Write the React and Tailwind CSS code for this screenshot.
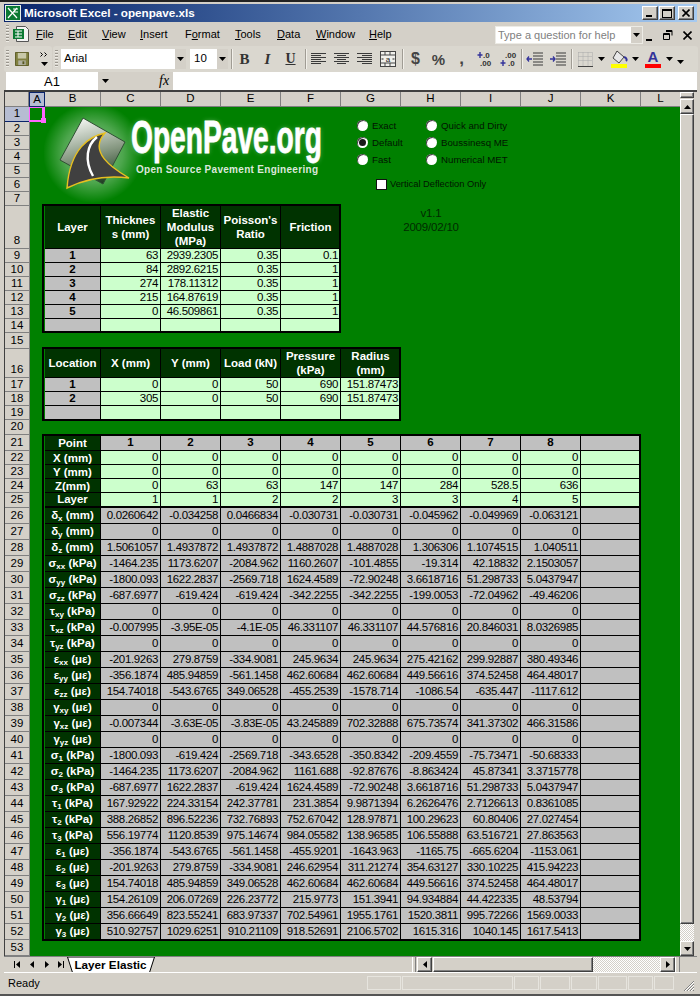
import React from "react"

const BEVEL = "border border-t-white border-l-white border-r-[#404040] border-b-[#404040] shadow-[inset_-1px_-1px_0_#808080] bg-[#d4d0c8]"
const DITHER = "bg-[image:repeating-conic-gradient(#ffffff_0_25%,#d4d0c8_0_50%)] bg-[length:2px_2px]"

// column widths B..L
const COLS = ["w-[56px]", "w-[60px]", "w-[60px]", "w-[60px]", "w-[60px]", "w-[60px]", "w-[60px]", "w-[60px]", "w-[60px]", "w-[60px]", "w-[40px]"]
const COL_NAMES = ["B", "C", "D", "E", "F", "G", "H", "I", "J", "K", "L"]

const LINE = "border-r border-b border-black"
const BOLD = "font-bold text-[11.5px]"
const NUM = "flex items-center justify-end pr-[2px] whitespace-nowrap text-[11.5px] tracking-[-0.35px]"
const KIND = {
    head: `${LINE} bg-[#003300] text-white ${BOLD} flex items-center justify-center text-center leading-[14px] whitespace-pre-line`,
    headT: `border-r border-b-2 border-black bg-[#003300] text-white ${BOLD} flex items-center justify-center`,
    tag: `${LINE} bg-[#c0c0c0] ${BOLD} flex items-center justify-center`,
    num: `${LINE} bg-[#ccffcc] ${NUM}`,
    numT: `border-r border-b-2 border-black bg-[#ccffcc] ${NUM}`,
    gray: `${LINE} bg-[#c0c0c0] ${NUM}`,
}

const ZERO = ["0", "0", "0", "0", "0", "0", "0", "0"]

const RESULTS = [
    [26, "δ", "x", " (mm)", ["0.0260642", "-0.034258", "0.0466834", "-0.030731", "-0.030731", "-0.045962", "-0.049969", "-0.063121"]],
    [27, "δ", "y", " (mm)", ZERO],
    [28, "δ", "z", " (mm)", ["1.5061057", "1.4937872", "1.4937872", "1.4887028", "1.4887028", "1.306306", "1.1074515", "1.040511"]],
    [29, "σ", "xx", " (kPa)", ["-1464.235", "1173.6207", "-2084.962", "1160.2607", "-101.4855", "-19.314", "42.18832", "2.1503057"]],
    [30, "σ", "yy", " (kPa)", ["-1800.093", "1622.2837", "-2569.718", "1624.4589", "-72.90248", "3.6618716", "51.298733", "5.0437947"]],
    [31, "σ", "zz", " (kPa)", ["-687.6977", "-619.424", "-619.424", "-342.2255", "-342.2255", "-199.0053", "-72.04962", "-49.46206"]],
    [32, "τ", "xy", " (kPa)", ZERO],
    [33, "τ", "xz", " (kPa)", ["-0.007995", "-3.95E-05", "-4.1E-05", "46.331107", "46.331107", "44.576816", "20.846031", "8.0326985"]],
    [34, "τ", "yz", " (kPa)", ZERO],
    [35, "ε", "xx", " (με)", ["-201.9263", "279.8759", "-334.9081", "245.9634", "245.9634", "275.42162", "299.92887", "380.49346"]],
    [36, "ε", "yy", " (με)", ["-356.1874", "485.94859", "-561.1458", "462.60684", "462.60684", "449.56616", "374.52458", "464.48017"]],
    [37, "ε", "zz", " (με)", ["154.74018", "-543.6765", "349.06528", "-455.2539", "-1578.714", "-1086.54", "-635.447", "-1117.612"]],
    [38, "γ", "xy", " (με)", ZERO],
    [39, "γ", "xz", " (με)", ["-0.007344", "-3.63E-05", "-3.83E-05", "43.245889", "702.32888", "675.73574", "341.37302", "466.31586"]],
    [40, "γ", "yz", " (με)", ZERO],
    [41, "σ", "1", " (kPa)", ["-1800.093", "-619.424", "-2569.718", "-343.6528", "-350.8342", "-209.4559", "-75.73471", "-50.68333"]],
    [42, "σ", "2", " (kPa)", ["-1464.235", "1173.6207", "-2084.962", "1161.688", "-92.87676", "-8.863424", "45.87341", "3.3715778"]],
    [43, "σ", "3", " (kPa)", ["-687.6977", "1622.2837", "-619.424", "1624.4589", "-72.90248", "3.6618716", "51.298733", "5.0437947"]],
    [44, "τ", "1", " (kPa)", ["167.92922", "224.33154", "242.37781", "231.3854", "9.9871394", "6.2626476", "2.7126613", "0.8361085"]],
    [45, "τ", "2", " (kPa)", ["388.26852", "896.52236", "732.76893", "752.67042", "128.97871", "100.29623", "60.80406", "27.027454"]],
    [46, "τ", "3", " (kPa)", ["556.19774", "1120.8539", "975.14674", "984.05582", "138.96585", "106.55888", "63.516721", "27.863563"]],
    [47, "ε", "1", " (με)", ["-356.1874", "-543.6765", "-561.1458", "-455.9201", "-1643.963", "-1165.75", "-665.6204", "-1153.061"]],
    [48, "ε", "2", " (με)", ["-201.9263", "279.8759", "-334.9081", "246.62954", "311.21274", "354.63127", "330.10225", "415.94223"]],
    [49, "ε", "3", " (με)", ["154.74018", "485.94859", "349.06528", "462.60684", "462.60684", "449.56616", "374.52458", "464.48017"]],
    [50, "γ", "1", " (με)", ["154.26109", "206.07269", "226.23772", "215.9773", "151.3941", "94.934884", "44.422335", "48.53794"]],
    [51, "γ", "2", " (με)", ["356.66649", "823.55241", "683.97337", "702.54961", "1955.1761", "1520.3811", "995.72266", "1569.0033"]],
    [52, "γ", "3", " (με)", ["510.92757", "1029.6251", "910.21109", "918.52691", "2106.5702", "1615.316", "1040.145", "1617.5413"]],
]

function Row({ n, h, tall, children }) {
    const selected = n === 1
    return (
        <div className={`flex ${h}`}>
            <div className={`w-[25px] shrink-0 flex justify-center border-r border-b text-[11.5px] ${tall ? "items-end pb-[2px]" : "items-center"} ${selected ? "bg-[#b6bdd2] border-[#0a246a]" : "bg-[#d4d0c8] border-[#808080]"}`}>
                {n}
            </div>
            <div className="w-[15px] shrink-0" />
            {children}
        </div>
    )
}

function Cells({ kind, items, from = 0 }) {
    return items.map((item, i) => (
        <div key={i} className={`${COLS[i + from]} shrink-0 ${KIND[kind]}`}>{item}</div>
    ))
}

function Label({ sym, sub, unit }) {
    return (
        <div className={`${COLS[0]} shrink-0 ${LINE} bg-[#003300] text-white ${BOLD} flex items-center justify-center whitespace-pre`}>
            <span>{sym}</span>
            <span className="text-[8px] relative top-[3px]">{sub}</span>
            <span>{unit}</span>
        </div>
    )
}

function Radio({ on, label }) {
    return (
        <div className="flex items-center h-[17px] gap-[4px]">
            <span className="w-[11px] h-[11px] rounded-full bg-white shadow-[inset_1px_1px_0_#404040] flex items-center justify-center">
                {on && <span className="w-[7px] h-[7px] rounded-full bg-[#1a1a1a]" />}
            </span>
            <span>{label}</span>
        </div>
    )
}

function Logo() {
    return (
        <svg className="absolute left-[39px] top-[15px]" width="300" height="96" viewBox="44 107 300 96">
            <defs>
                <radialGradient id="halo">
                    <stop offset="0%" stopColor="#ffffff" stopOpacity="0.55" />
                    <stop offset="60%" stopColor="#ffffff" stopOpacity="0.3" />
                    <stop offset="100%" stopColor="#ffffff" stopOpacity="0" />
                </radialGradient>
                <linearGradient id="plate" x1="0.35" y1="0" x2="0.6" y2="1">
                    <stop offset="0%" stopColor="#f4f6f2" />
                    <stop offset="55%" stopColor="#84967f" />
                    <stop offset="100%" stopColor="#1f3d22" />
                </linearGradient>
                <filter id="glow" x="-10%" y="-30%" width="120%" height="160%">
                    <feGaussianBlur stdDeviation="2.5" />
                </filter>
            </defs>
            <ellipse cx="93" cy="153" rx="50" ry="50" fill="url(#halo)" />
            <polygon points="83,118 125,142 103,184 60,160" fill="url(#plate)" stroke="#2f4f33" strokeWidth="1" />
            <path d="M105,133 C90,136 70,148 67,188 C85,179 105,175 129,178 C112,168 88,152 105,133 Z" fill="#404040" stroke="#e8c020" strokeWidth="1.4" />
            <path d="M97,137 C87,145 84,160 93,176" fill="none" stroke="#ffffff" strokeWidth="2.4" />
            <text x="131" y="153" textLength="191" lengthAdjust="spacingAndGlyphs" fontFamily="'Liberation Sans', sans-serif" fontWeight="700" fontSize="46" fill="#ffffff" opacity="0.35" filter="url(#glow)">OpenPave.org</text>
            <text x="131" y="153" textLength="191" lengthAdjust="spacingAndGlyphs" fontFamily="'Liberation Sans', sans-serif" fontWeight="700" fontSize="46" fill="#ffffff" stroke="#ffffff" strokeWidth="0.8">OpenPave.org</text>
            <text x="136" y="173" textLength="182" lengthAdjust="spacing" fontFamily="'Liberation Sans', sans-serif" fontWeight="700" fontSize="10" fill="#dbe8db">Open Source Pavement Engineering</text>
        </svg>
    )
}

function Tri({ dir = "down", className = "" }) {
    const shapes = { down: "0,0 7,0 3.5,4", up: "0,4 7,4 3.5,0", left: "4,0 4,7 0,3.5", right: "0,0 0,7 4,3.5" }
    const size = dir === "down" || dir === "up" ? [7, 4] : [4, 7]
    return (
        <svg className={className} width={size[0]} height={size[1]} viewBox={`0 0 ${size[0]} ${size[1]}`}>
            <polygon points={shapes[dir]} fill="#000" />
        </svg>
    )
}

function Grip() {
    return <div className="w-[3px] h-[18px] shrink-0 border-y-0 bg-[image:repeating-linear-gradient(#9a968e_0_1px,#eeece6_1px_2px,#d4d0c8_2px_3px)]" />
}

function Sep({ className }) {
    return <div className={`w-[2px] h-[20px] shrink-0 border-l border-[#a09c94] bg-[#f2f0ea] ${className}`} />
}

function Btn({ w = "w-[23px]", children }) {
    return <div className={`${w} h-full shrink-0 flex items-center justify-center`}>{children}</div>
}

function Lines({ rows }) {
    return (
        <svg width="16" height="14" viewBox="0 0 16 14">
            {rows.map((r, i) => <line key={i} x1={r[0]} x2={r[1]} y1={i * 2 + 1.5} y2={i * 2 + 1.5} stroke="#3a3a3a" />)}
        </svg>
    )
}

function Decimal({ more }) {
    return (
        <svg width="20" height="16" viewBox="0 0 20 16">
            <text x={more ? 8 : 7} y="7" fontSize="8" fontWeight="700" fontFamily="'Liberation Sans', sans-serif" fill="#333">{more ? ".0" : ".00"}</text>
            <text x={more ? 5 : 10} y="15" fontSize="8" fontWeight="700" fontFamily="'Liberation Sans', sans-serif" fill="#333">{more ? ".00" : ".0"}</text>
            {more
                ? <path d="M5,1 v6 M2.5,4 h5" stroke="#33339a" strokeWidth="1.4" />
                : <path d="M5,9 v6 M2.5,12 h5" stroke="#33339a" strokeWidth="1.4" />}
        </svg>
    )
}

function Indent({ flip }) {
    return (
        <svg width="18" height="16" viewBox="0 0 18 16">
            <path d="M7,2 h10 M7,5 h10 M7,8 h10 M7,11 h10 M7,14 h10" stroke="#3a3a3a" />
            <path d={flip ? "M1,8 h5 M3,5.5 L1,8 L3,10.5" : "M1,8 h5 M4,5.5 L6,8 L4,10.5"} stroke="#33339a" strokeWidth="1.3" fill="none" />
        </svg>
    )
}

function TitleBar() {
    return (
        <div className="h-[18px] shrink-0 flex items-center bg-gradient-to-r from-[#0a246a] to-[#a6caf0] pl-[1px] pr-[3px]">
            <svg width="16" height="16" viewBox="0 0 16 16" className="shrink-0">
                <rect x="0.5" y="0.5" width="15" height="15" fill="#0b7a33" stroke="#e8f0e8" />
                <path d="M3,3 L12,13 M12,3 L3,13 M8,4 h5 M9,7 h4" stroke="#ffffff" strokeWidth="1.2" />
            </svg>
            <span className="ml-[3px] text-white font-bold text-[11.7px] leading-none">Microsoft Excel - openpave.xls</span>
            <div className="ml-auto flex gap-[1px]">
                <div className={`w-[16px] h-[14px] ${BEVEL} flex items-end pl-[3px] pb-[2px]`}><div className="w-[6px] h-[2px] bg-black" /></div>
                <div className={`w-[16px] h-[14px] ${BEVEL} flex items-center justify-center mr-[2px]`}><div className="w-[10px] h-[9px] border border-t-2 border-black" /></div>
                <div className={`w-[16px] h-[14px] ${BEVEL} flex items-center justify-center`}>
                    <svg width="8" height="8" viewBox="0 0 8 8"><path d="M0.5,0.5 L7.5,7.5 M7.5,0.5 L0.5,7.5" stroke="#000" strokeWidth="1.6" /></svg>
                </div>
            </div>
        </div>
    )
}

function MenuBar() {
    const items = [
        ["", "F", "ile", "w-[32px]"],
        ["", "E", "dit", "w-[34px]"],
        ["", "V", "iew", "w-[38px]"],
        ["", "I", "nsert", "w-[45px]"],
        ["F", "o", "rmat", "w-[50px]"],
        ["", "T", "ools", "w-[42px]"],
        ["", "D", "ata", "w-[39px]"],
        ["", "W", "indow", "w-[53px]"],
        ["", "H", "elp", "w-[40px]"],
    ]
    return (
        <div className="h-[24px] shrink-0 flex items-center relative">
            <div className="ml-[2px]"><Grip /></div>
            <svg width="18" height="18" viewBox="0 0 18 18" className="ml-[3px] shrink-0">
                <path d="M4.5,1.5 h9 l3,3 v12 h-12 z" fill="#f4f4f4" stroke="#555" />
                <rect x="1" y="4" width="11" height="10" fill="#0b7a33" />
                <path d="M3,6 h7 M3,9 h7 M3,12 h7 M6,6 v6" stroke="#fff" />
            </svg>
            <div className="flex ml-[6px] text-[11px] pt-[1px]">
                {items.map(([a, u, b, w]) => (
                    <span key={u + b} className={`${w} shrink-0`}>{a}<span className="underline">{u}</span>{b}</span>
                ))}
            </div>
            <div className="absolute left-[491px] top-[4px] w-[148px] h-[18px] bg-white border border-[#ecebe5] flex items-center pl-[2px] text-[#808080] text-[11px]">
                Type a question for help
                <div className="ml-auto w-[11px] h-full bg-[#d4d0c8] flex items-center justify-center"><Tri /></div>
            </div>
            <div className="absolute left-[642px] top-[6px] flex items-center h-[14px]">
                <div className="w-[6px] h-[2px] bg-black mt-[9px]" />
                <svg width="10" height="10" viewBox="0 0 10 10" className="ml-[11px]"><path d="M3,0.5 h6 v5 M3,1.5 h6 M0.5,3.5 h6 v6 h-6 z M0.5,4.5 h6" stroke="#000" fill="none" /></svg>
                <svg width="9" height="9" viewBox="0 0 9 9" className="ml-[10px]"><path d="M0.5,0.5 L8.5,8.5 M8.5,0.5 L0.5,8.5" stroke="#000" strokeWidth="1.6" /></svg>
            </div>
        </div>
    )
}

function ToolBar() {
    return (
        <div className="h-[26px] shrink-0 flex items-center">
            <div className="w-[48px] h-full shrink-0 flex items-center pl-[2px] bg-[#dad7cf] rounded-[3px]">
                <Grip />
                <svg width="14" height="14" viewBox="0 0 15 15" className="ml-[6px]">
                    <path d="M0.5,0.5 h14 v14 h-14 z" fill="#808040" stroke="#585820" />
                    <rect x="3" y="1" width="9" height="6" fill="#c8c8a8" />
                    <rect x="3.5" y="9" width="8" height="5" fill="#b0b0a0" />
                    <rect x="8" y="10" width="2" height="3" fill="#585820" />
                </svg>
                <div className="ml-[11px] flex flex-col items-center gap-[5px]">
                    <svg width="8" height="5" viewBox="0 0 8 5"><path d="M0.5,0.5 L2.5,2.5 L0.5,4.5 M4.5,0.5 L6.5,2.5 L4.5,4.5" stroke="#000" fill="none" /></svg>
                    <Tri />
                </div>
            </div>
            <div className="w-[645px] ml-[1px] h-full shrink-0 flex items-center pl-[2px] bg-[#dad7cf] rounded-[3px]">
                <Grip />
                <div className="ml-[3px] w-[125px] h-[20px] shrink-0 bg-white flex items-center pl-[3px] text-[11.5px]">
                    Arial
                    <div className="ml-auto w-[11px] h-full bg-[#d4d0c8] flex items-center justify-center"><Tri /></div>
                </div>
                <div className="ml-[4px] w-[38px] h-[20px] shrink-0 bg-white flex items-center pl-[4px] text-[11.5px]">
                    10
                    <div className="ml-auto w-[11px] h-full bg-[#d4d0c8] flex items-center justify-center"><Tri /></div>
                </div>
                <Sep className="ml-[3px]" />
                <Btn><span className="font-['Liberation_Serif',serif] font-bold text-[15px] text-[#333]">B</span></Btn>
                <Btn><span className="font-['Liberation_Serif',serif] font-bold italic text-[15px] text-[#333]">I</span></Btn>
                <Btn><span className="font-['Liberation_Serif',serif] font-bold text-[14px] text-[#333] underline">U</span></Btn>
                <Sep className="ml-[3px]" />
                <Btn><Lines rows={[[0, 15], [0, 10], [0, 15], [0, 10], [0, 15], [0, 10]]} /></Btn>
                <Btn><Lines rows={[[0, 15], [3, 12], [0, 15], [3, 12], [0, 15], [3, 12]]} /></Btn>
                <Btn><Lines rows={[[0, 15], [5, 15], [0, 15], [5, 15], [0, 15], [5, 15]]} /></Btn>
                <Btn>
                    <svg width="16" height="16" viewBox="0 0 16 16">
                        <rect x="0.5" y="0.5" width="15" height="15" fill="#f0f0ec" stroke="#444" />
                        <path d="M0,4 h16 M0,12 h16 M5,0 v4 M10,0 v4 M5,12 v4 M10,12 v4" stroke="#444" />
                        <text x="8" y="10.5" textAnchor="middle" fontSize="8" fontFamily="'Liberation Sans', sans-serif" fill="#222">a</text>
                        <path d="M1.5,8 h2 M12.5,8 h2" stroke="#222" />
                    </svg>
                </Btn>
                <Sep className="ml-[3px]" />
                <Btn><span className="font-bold text-[16px] text-[#444]">$</span></Btn>
                <Btn><span className="font-bold text-[15px] text-[#444]">%</span></Btn>
                <Btn><span className="font-bold text-[17px] text-[#444] leading-[10px]">,</span></Btn>
                <Btn><Decimal more /></Btn>
                <Btn><Decimal /></Btn>
                <Sep className="ml-[2px]" />
                <Btn><Indent flip /></Btn>
                <Btn><Indent /></Btn>
                <Sep className="ml-[2px]" />
                <Btn w="w-[24px]">
                    <svg width="15" height="15" viewBox="0 0 15 15">
                        <path d="M0.5,0.5 h14 M0.5,4.5 h14 M0.5,8.5 h14 M0.5,0.5 v14 M5,0.5 v14 M10,0.5 v14 M14.5,0.5 v14" stroke="#a8a8a8" strokeDasharray="1 1" />
                        <path d="M0,14.5 h15" stroke="#444" />
                    </svg>
                </Btn>
                <Btn w="w-[8px]"><Tri /></Btn>
                <div className="ml-[2px]" />
                <Btn w="w-[24px]">
                    <svg width="17" height="18" viewBox="0 0 17 18">
                        <path d="M6,1 L13,7 L8,13 L2,8 Z" fill="#e8e8e8" stroke="#444" />
                        <path d="M13,7 C16,8 16,10 15,11" stroke="#33339a" strokeWidth="2" fill="none" />
                        <rect x="0" y="14" width="16" height="4" fill="#ffff00" />
                    </svg>
                </Btn>
                <Btn w="w-[8px]"><Tri /></Btn>
                <div className="ml-[2px]" />
                <Btn w="w-[24px]">
                    <div className="relative flex flex-col items-center">
                        <span className="font-bold text-[15px] leading-[14px] text-[#33339a]">A</span>
                        <div className="w-[16px] h-[4px] bg-[#ff0000]" />
                    </div>
                </Btn>
                <Btn w="w-[8px]"><Tri /></Btn>
                <Btn w="w-[12px]"><Tri className="mt-[6px] ml-[2px]" /></Btn>
            </div>
        </div>
    )
}

function FormulaBar() {
    return (
        <div className="h-[18px] shrink-0 flex items-center">
            <div className="ml-[2px] w-[92px] h-full bg-white flex items-center justify-center text-[13px]">A1</div>
            <Tri className="ml-[4px]" />
            <span className="ml-[50px] font-['Liberation_Serif',serif] italic text-[14px] w-[13px]">fx</span>
            <div className="ml-[1px] flex-1 h-full bg-white" />
        </div>
    )
}

function Sheet() {
    const blank = (n, h) => <Row key={n} n={n} h={h} />
    return (
        <div className="relative w-[675px] shrink-0 overflow-hidden bg-[#008000]">
            <div className="flex h-[15px] bg-[#d4d0c8] text-[11.5px]">
                <div className="w-[24px] shrink-0 border-r border-b border-[#808080]" />
                <div className="w-[16px] shrink-0 bg-[#b6bdd2] border border-[#0a246a] flex items-center justify-center">A</div>
                {COL_NAMES.map((c, i) => (
                    <div key={c} className={`${COLS[i]} shrink-0 flex items-center justify-center border-r border-b border-[#808080]`}>{c}</div>
                ))}
            </div>
            <Row n={1} h="h-[15px]" />
            {[2, 3, 4, 5, 6, 7].map((n) => blank(n, "h-[14px]"))}
            <Row n={8} h="h-[43px]" tall>
                <Cells kind="head" items={["Layer", "Thicknes\ns (mm)", "Elastic\nModulus\n(MPa)", "Poisson's\nRatio", "Friction"]} />
                <div className="w-[60px] shrink-0" />
                <div className="w-[60px] shrink-0 flex flex-col items-center whitespace-nowrap text-[#002a00] text-[11.5px] tracking-[-0.2px] leading-[14px]">
                    <span>v1.1</span>
                    <span>2009/02/10</span>
                </div>
            </Row>
            {[
                [9, "1", "63", "2939.2305", "0.35", "0.1"],
                [10, "2", "84", "2892.6215", "0.35", "1"],
                [11, "3", "274", "178.11312", "0.35", "1"],
                [12, "4", "215", "164.87619", "0.35", "1"],
                [13, "5", "0", "46.509861", "0.35", "1"],
                [14, "", "", "", "", ""],
            ].map(([n, layer, ...vals]) => (
                <Row key={n} n={n} h="h-[14px]">
                    <Cells kind="tag" items={[layer]} />
                    <Cells kind="num" items={vals} from={1} />
                </Row>
            ))}
            {blank(15, "h-[16px]")}
            <Row n={16} h="h-[29px]" tall>
                <Cells kind="head" items={["Location", "X (mm)", "Y (mm)", "Load (kN)", "Pressure\n(kPa)", "Radius\n(mm)"]} />
            </Row>
            {[
                [17, "1", "0", "0", "50", "690", "151.87473"],
                [18, "2", "305", "0", "50", "690", "151.87473"],
                [19, "", "", "", "", "", ""],
            ].map(([n, loc, ...vals]) => (
                <Row key={n} n={n} h="h-[14px]">
                    <Cells kind="tag" items={[loc]} />
                    <Cells kind="num" items={vals} from={1} />
                </Row>
            ))}
            {blank(20, "h-[15px]")}
            <Row n={21} h="h-[16px]">
                <Cells kind="head" items={["Point"]} />
                <Cells kind="tag" items={["1", "2", "3", "4", "5", "6", "7", "8", ""]} from={1} />
            </Row>
            {[
                [22, "X (mm)", ...ZERO, ""],
                [23, "Y (mm)", ...ZERO, ""],
                [24, "Z(mm)", "0", "63", "63", "147", "147", "284", "528.5", "636", ""],
            ].map(([n, label, ...vals]) => (
                <Row key={n} n={n} h="h-[14px]">
                    <Cells kind="head" items={[label]} />
                    <Cells kind="num" items={vals} from={1} />
                </Row>
            ))}
            <Row n={25} h="h-[15px]">
                <Cells kind="headT" items={["Layer"]} />
                <Cells kind="numT" items={["1", "1", "2", "2", "3", "3", "4", "5", ""]} from={1} />
            </Row>
            {RESULTS.map(([n, sym, sub, unit, vals]) => (
                <Row key={n} n={n} h="h-[16px]">
                    <Label sym={sym} sub={sub} unit={unit} />
                    <Cells kind="gray" items={[...vals, ""]} from={1} />
                </Row>
            ))}
            {blank(53, "h-[16px]")}

            {/* things that float over the cells */}
            <div className="absolute left-[24px] top-[15px] w-[16px] h-[15px] border-l border-t border-r-[3px] border-b-2 border-[#ff66ff]" />
            <div className="absolute left-[36px] top-[26px] w-[5px] h-[5px] bg-[#ff66ff]" />
            <Logo />
            <div className="absolute left-[352px] top-[25px] flex text-[9.7px] text-[#001500]">
                <div className="w-[69px]">
                    <Radio label="Exact" />
                    <Radio on label="Default" />
                    <Radio label="Fast" />
                </div>
                <div>
                    <Radio label="Quick and Dirty" />
                    <Radio label="Boussinesq ME" />
                    <Radio label="Numerical MET" />
                </div>
            </div>
            <div className="absolute left-[371px] top-[87px] flex items-center gap-[3px] text-[9.3px] text-[#001500]">
                <span className="w-[11px] h-[11px] bg-white border border-[#111]" />
                Vertical Deflection Only
            </div>
            <div className="absolute left-[37px] top-[112px] w-[299px] h-[129px] border-2 border-black" />
            <div className="absolute left-[37px] top-[255px] w-[359px] h-[74px] border-2 border-black" />
            <div className="absolute left-[37px] top-[342px] w-[599px] h-[507px] border-2 border-black" />
        </div>
    )
}

function VScroll() {
    return (
        <div className="w-[14px] shrink-0 flex flex-col">
            <div className={`h-[6px] shrink-0 ${BEVEL}`} />
            <div className={`h-[15px] mt-[1px] shrink-0 ${BEVEL} flex items-center justify-center`}><Tri dir="up" /></div>
            <div className={`h-[810px] shrink-0 ${BEVEL}`} />
            <div className={`flex-1 ${DITHER}`} />
            <div className={`h-[15px] shrink-0 ${BEVEL} flex items-center justify-center`}><Tri /></div>
        </div>
    )
}

function TabBar() {
    return (
        <div className="h-[16px] shrink-0 flex items-center border-t border-[#808080]">
            <div className="ml-[5px] w-[58px] shrink-0 flex items-center">
                <div className="w-[15px] flex items-center justify-center gap-[1px]"><div className="w-[1px] h-[7px] bg-black" /><Tri dir="left" /></div>
                <div className="w-[15px] flex justify-center"><Tri dir="left" /></div>
                <div className="w-[15px] flex justify-center"><Tri dir="right" /></div>
                <div className="w-[13px] flex items-center justify-center gap-[1px]"><Tri dir="right" /><div className="w-[1px] h-[7px] bg-black" /></div>
            </div>
            <div className="relative w-[88px] h-full shrink-0 flex items-center justify-center pr-[1px]">
                <svg className="absolute inset-0" width="88" height="16" viewBox="0 0 88 16">
                    <polygon points="0.5,0 5.5,15.5 82.5,15.5 87.5,0" fill="#ffffff" stroke="#000" />
                </svg>
                <span className="relative font-bold text-[11.7px] leading-none">Layer Elastic</span>
            </div>
            <div className="ml-[257px] w-[4px] h-full shrink-0 border-l border-white border-r border-r-[#808080]" />
            <div className={`ml-[1px] w-[15px] h-full shrink-0 ${BEVEL} flex items-center justify-center`}><Tri dir="left" /></div>
            <div className={`ml-[1px] w-[160px] h-full shrink-0 ${BEVEL}`} />
            <div className={`w-[67px] h-full shrink-0 ${DITHER}`} />
            <div className={`w-[15px] h-full shrink-0 ${BEVEL} flex items-center justify-center`}><Tri dir="right" /></div>
            <div className="w-[5px] h-full shrink-0 border-l border-white border-r border-r-[#808080]" />
        </div>
    )
}

function StatusBar() {
    const panes = ["w-[34px]", "w-[111px]", "w-[25px]", "w-[30px]", "w-[26px]", "w-[29px]", "w-[25px]", "w-[20px]"]
    return (
        <div className="flex-1 flex items-center border-t border-white relative pl-[4px]">
            Ready
            <div className="absolute left-[363px] top-[3px] flex gap-[1px]">
                {panes.map((w, i) => <div key={i} className={`${w} h-[14px] border border-[#e6e4de]`} />)}
            </div>
            <svg className="absolute right-[2px] bottom-[2px]" width="12" height="12" viewBox="0 0 12 12">
                <path d="M11,1 L1,11 M11,4 L4,11 M11,7 L7,11 M11,10 L10,11" stroke="#808080" />
                <path d="M11,2 L2,11 M11,5 L5,11 M11,8 L8,11" stroke="#ffffff" />
            </svg>
        </div>
    )
}

export default function App() {
    return (
        <div className="w-[700px] h-[996px] overflow-hidden bg-[#d4d0c8] border-t-2 border-[#222] border-b-2 border-b-[#555] pt-[2px] pl-[4px] pr-[3px] flex flex-col font-['Liberation_Sans',Arial,sans-serif] text-[11px] leading-none text-black">
            <TitleBar />
            <MenuBar />
            <ToolBar />
            <FormulaBar />
            <div className="flex shrink-0 h-[866px] border-t-2 border-l border-[#404040]">
                <Sheet />
                <VScroll />
            </div>
            <TabBar />
            <StatusBar />
        </div>
    )
}
